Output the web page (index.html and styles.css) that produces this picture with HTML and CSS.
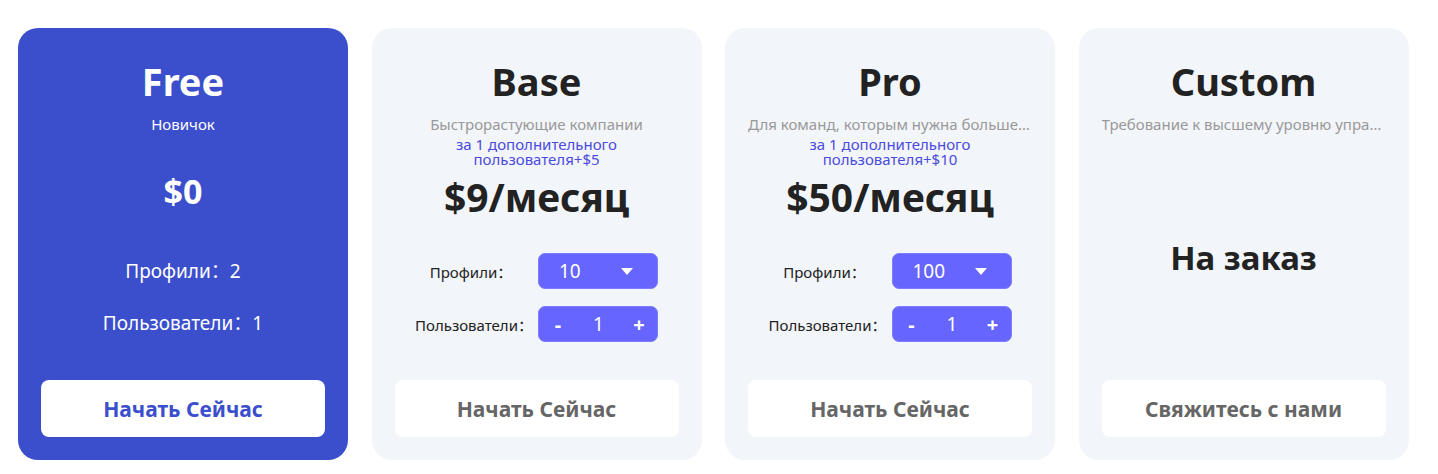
FILE: index.html
```html
<!DOCTYPE html>
<html lang="ru">
<head>
    <meta charset="UTF-8">
    <meta name="viewport" content="width=device-width, initial-scale=1.0">
    <title>Тарифы</title>
    <link rel="stylesheet" href="styles.css">
</head>
<body>

    <div class="plans">
        <!-- Free -->
        <div class="card card-free">
            <div class="title">Free</div>
            <div class="subtitle">Новичок</div>
            <div class="extra"></div>
            <div class="price price-small">$0</div>
            <div class="free-row">Профили：2</div>
            <div class="free-row">Пользователи：1</div>
            <button class="start-btn">Начать Сейчас</button>
        </div>

        <!-- Base -->
        <div class="card">
            <div class="title">Base</div>
            <div class="subtitle">Быстрорастующие компании</div>
            <div class="extra">за 1 дополнительного<br>пользователя+$5</div>
            <div class="price">$9/месяц</div>
            <div class="opt-row">
                <span class="opt-label">Профили：</span>
                <div class="select-box">
                    <span>10</span>
                    <span class="caret"></span>
                </div>
            </div>
            <div class="opt-row">
                <span class="opt-label">Пользователи：</span>
                <div class="stepper">
                    <span class="step">-</span>
                    <span>1</span>
                    <span class="step">+</span>
                </div>
            </div>
            <button class="start-btn">Начать Сейчас</button>
        </div>

        <!-- Pro -->
        <div class="card">
            <div class="title">Pro</div>
            <div class="subtitle">Для команд, которым нужна больше возможностей</div>
            <div class="extra">за 1 дополнительного<br>пользователя+$10</div>
            <div class="price">$50/месяц</div>
            <div class="opt-row">
                <span class="opt-label">Профили：</span>
                <div class="select-box">
                    <span>100</span>
                    <span class="caret"></span>
                </div>
            </div>
            <div class="opt-row">
                <span class="opt-label">Пользователи：</span>
                <div class="stepper">
                    <span class="step">-</span>
                    <span>1</span>
                    <span class="step">+</span>
                </div>
            </div>
            <button class="start-btn">Начать Сейчас</button>
        </div>

        <!-- Custom -->
        <div class="card">
            <div class="title">Custom</div>
            <div class="subtitle">Требование к высшему уровню управления и безопасности</div>
            <div class="custom-price">На заказ</div>
            <button class="start-btn">Свяжитесь с нами</button>
        </div>
    </div>

</body>
</html>
```

FILE: styles.css
```css
body {
    font-family: 'Noto Sans', 'Noto Sans CJK SC', sans-serif;
    margin: 0;
    padding: 0;
    background-color: #ffffff;
    color: #222222;
}

.plans {
    display: flex;
    gap: 23.5px;
    padding: 28px 0 0 18px;
}

.card {
    width: 330px;
    height: 432px;
    box-sizing: border-box;
    padding: 30px 23px 23px;
    background-color: #f2f5fa;
    border-radius: 20px;
    display: flex;
    flex-direction: column;
    align-items: center;
    text-align: center;
}

.card-free {
    background-color: #3b4fcd;
    color: #ffffff;
}

.title {
    font-size: 38px;
    font-weight: 700;
    line-height: 46px;
}

.subtitle {
    margin-top: 10px;
    width: 100%;
    font-size: 15px;
    line-height: 20px;
    color: #999999;
    white-space: nowrap;
    overflow: hidden;
    text-overflow: ellipsis;
}

.card-free .subtitle {
    color: #ffffff;
}

.extra {
    margin-top: 3px;
    min-height: 29px;
    font-size: 15px;
    line-height: 14.5px;
    color: #4b4bdc;
}

.price {
    margin-top: 7px;
    font-size: 39px;
    font-weight: 700;
    line-height: 48px;
}

.price-small {
    font-size: 34px;
    line-height: 36px;
}

.free-row {
    margin-top: 16px;
    height: 36px;
    line-height: 36px;
    font-size: 19px;
}

.price + .opt-row {
    margin-top: 32px;
}

.price-small + .free-row {
    margin-top: 44px;
}

.opt-row {
    margin-top: 17px;
    display: grid;
    grid-template-columns: 112px 120px;
    column-gap: 11px;
    align-items: center;
}

.opt-label {
    font-size: 15px;
    color: #222222;
    text-align: center;
    white-space: nowrap;
}

.select-box,
.stepper {
    height: 36px;
    box-sizing: border-box;
    background-color: #6666ff;
    border: 1px solid #7d7dff;
    border-radius: 7px;
    color: #ffffff;
    font-size: 19px;
    display: flex;
    align-items: center;
}

.select-box {
    justify-content: space-between;
    padding: 0 24px 0 20px;
}

.caret {
    width: 0;
    height: 0;
    border-left: 6px solid transparent;
    border-right: 6px solid transparent;
    border-top: 7px solid #ffffff;
}

.stepper {
    justify-content: space-between;
    padding: 0 12px 0 13px;
}

.step {
    font-weight: 700;
    font-size: 20px;
    width: 12px;
}

.custom-price {
    flex: 1;
    display: flex;
    align-items: center;
    justify-content: center;
    font-size: 33px;
    font-weight: 700;
}

.start-btn {
    margin-top: auto;
    width: 100%;
    height: 57px;
    border: none;
    border-radius: 8px;
    background-color: #ffffff;
    color: #666666;
    font-family: inherit;
    font-size: 21px;
    font-weight: 700;
    cursor: pointer;
}

.card-free .start-btn {
    color: #3b4fcd;
}
```
